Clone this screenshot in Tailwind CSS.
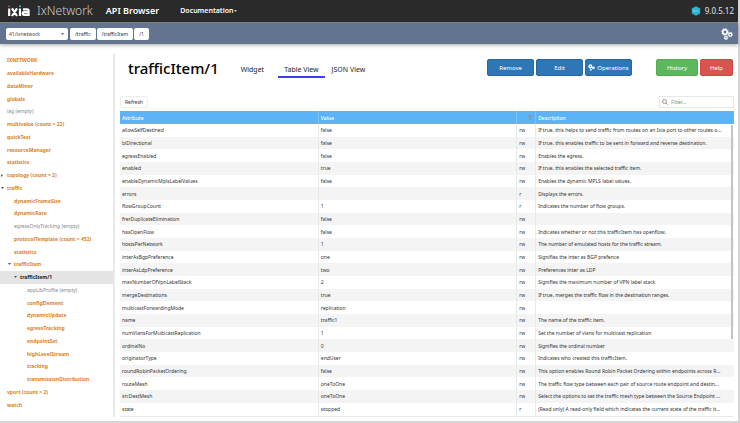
<!DOCTYPE html>
<html lang="en">
<head>
  <meta charset="UTF-8" />
  <meta name="viewport" content="width=device-width, initial-scale=1.0" />
  <title>IxNetwork API Browser</title>
  <script src="https://cdn.jsdelivr.net/npm/@tailwindcss/browser@4"></script>
</head>
<body class="h-screen bg-white font-['Noto_Sans',sans-serif] text-[5px] leading-[8px] text-[#333]">
<div class="h-full min-h-[420px] flex flex-col border-r-2 border-b-2 border-[#d6d6d6]">

  <!-- Top bar -->
  <header class="h-[23px] shrink-0 flex items-center bg-[#2a2a2a] border-b border-[#8a8f96] pl-2 pr-1 text-white">
    <svg class="w-[22px] h-[12px]" viewBox="0 0 22 12" fill="none" stroke="#fff" stroke-width="2.200" aria-label="ixia">
      <path d="M1.200 3.400V11M4 3.400l5 7.600M9 3.400L4 11M12 3.400V11M20.600 11V6q0-1.700-1.600-1.700H15M20.600 7.200H16q-1.300 0-1.300 1.300T16 9.900H20.600" />
      <path d="M.2 1.300H2.200" stroke="#e23b3b" stroke-width="1.400" />
      <path d="M11 1.300h2" stroke="#3bb4d8" stroke-width="1.400" />
    </svg>
    <span class="ml-[7px] text-[12px] leading-[16px] font-light text-[#d0d0d0]">IxNetwork</span>
    <span class="ml-[13px] text-[9px] leading-[12px] font-semibold">API Browser</span>
    <button class="ml-[21px] flex items-center gap-px text-[7px] leading-[10px] font-semibold">Documentation
      <svg class="w-[3px] h-[2px]" viewBox="0 0 4 2" fill="#fff"><path d="M0 0h4L2 2z" /></svg>
    </button>
    <div class="ml-auto flex items-center gap-1">
      <svg class="w-[10px] h-[10px]" viewBox="0 0 10 10">
        <path d="M5 .3l4.200 2.300v4.800L5 9.700.8 7.400V2.600z" fill="#2fb1cf" />
        <path d="M2.500 5.300V4.500l1.200.8V4.500M4.500 5h1.200M6.400 4.500l1 .8" stroke="#d8f3f8" stroke-width=".6" fill="none" />
      </svg>
      <span class="text-[8px] leading-[12px] text-[#e4e4e4]">9.0.5.12</span>
    </div>
  </header>

  <!-- Path bar -->
  <nav class="h-[21px] shrink-0 flex items-center bg-[#62748f] pl-[6px] pr-[5px] shadow-[0_1px_4px_rgba(0,0,0,0.35)] z-10">
    <div class="relative flex items-center">
      <select aria-label="Session" class="appearance-none w-[62px] h-3 rounded-[2px] bg-white pl-[3px] text-[5px] leading-[8px] text-[#444]">
        <option>41/ixnetwork</option>
      </select>
      <svg class="absolute right-1 w-[3px] h-[2px] pointer-events-none" viewBox="0 0 4 2" fill="#333"><path d="M0 0h4L2 2z" /></svg>
    </div>
    <div class="ml-[2px] flex gap-px">
      <a href="#" class="h-3 px-[5px] rounded-[2px] bg-white text-[5px] leading-[12px]">/traffic</a>
      <a href="#" class="h-3 px-[5px] rounded-[2px] bg-white text-[5px] leading-[12px]">/trafficItem</a>
      <a href="#" class="h-3 px-[5px] rounded-[2px] bg-white text-[5px] leading-[12px]">/1</a>
    </div>
    <button aria-label="Settings" class="ml-auto">
      <svg class="w-3 h-3" viewBox="0 0 12 12" fill="none" stroke="#fff">
        <circle cx="4" cy="4" r="2.300" stroke-width="1.700" />
        <circle cx="4" cy="4" r="3.400" stroke-width=".8" stroke-dasharray="1.300 1.370" />
        <circle cx="9.300" cy="6.600" r="1.600" stroke-width="1.300" />
        <circle cx="9.300" cy="6.600" r="2.400" stroke-width=".6" stroke-dasharray=".9 .98" />
        <circle cx="5" cy="9.800" r="1.300" stroke-width="1.200" />
        <circle cx="5" cy="9.800" r="2" stroke-width=".5" stroke-dasharray=".8 .77" />
      </svg>
    </button>
  </nav>

  <div class="flex-1 min-h-0 flex pt-[10px] pb-1">
    <!-- Tree -->
    <aside class="w-[115px] shrink-0 border-r-2 border-[#e9e9e9] pb-[6px]">
      <ul class="h-full flex flex-col font-bold text-[#d9821f] [&>li]:flex-1 [&>li]:flex [&>li]:items-center [&>li]:whitespace-nowrap">
        <li class="pl-[7px]"><a href="#">IXNETWORK</a></li>
        <li class="pl-[7px]"><a href="#">availableHardware</a></li>
        <li class="pl-[7px]"><a href="#">dataMiner</a></li>
        <li class="pl-[7px]"><a href="#">globals</a></li>
        <li class="pl-[7px] font-normal text-[#888]">lag (empty)</li>
        <li class="pl-[7px]"><a href="#">multivalue (count = 22)</a></li>
        <li class="pl-[7px]"><a href="#">quickTest</a></li>
        <li class="pl-[7px]"><a href="#">resourceManager</a></li>
        <li class="pl-[7px]"><a href="#">statistics</a></li>
        <li class="pl-px gap-1"><svg class="w-[2px] h-[3px]" viewBox="0 0 2 3" fill="#555"><path d="M0 0v3l2-1.500z" /></svg><a href="#">topology (count = 2)</a></li>
        <li class="pl-px gap-[3px]"><svg class="w-[3px] h-[2px]" viewBox="0 0 3 2" fill="#555"><path d="M0 0h3L1.500 2z" /></svg><a href="#">traffic</a></li>
        <li class="pl-[14px]"><a href="#">dynamicFrameSize</a></li>
        <li class="pl-[14px]"><a href="#">dynamicRate</a></li>
        <li class="pl-[14px] font-normal text-[#888]">egressOnlyTracking (empty)</li>
        <li class="pl-[14px]"><a href="#">protocolTemplate (count = 452)</a></li>
        <li class="pl-[14px]"><a href="#">statistics</a></li>
        <li class="pl-[8px] gap-[3px]"><svg class="w-[3px] h-[2px]" viewBox="0 0 3 2" fill="#555"><path d="M0 0h3L1.500 2z" /></svg><a href="#">trafficItem</a></li>
        <li class="pl-[14px] gap-[3px] bg-[#e4e4e4] text-[#222]"><svg class="w-[3px] h-[2px]" viewBox="0 0 3 2" fill="#555"><path d="M0 0h3L1.500 2z" /></svg><a href="#">trafficItem/1</a></li>
        <li class="pl-[27px] font-normal text-[#888]">appLibProfile (empty)</li>
        <li class="pl-[27px]"><a href="#">configElement</a></li>
        <li class="pl-[27px]"><a href="#">dynamicUpdate</a></li>
        <li class="pl-[27px]"><a href="#">egressTracking</a></li>
        <li class="pl-[27px]"><a href="#">endpointSet</a></li>
        <li class="pl-[27px]"><a href="#">highLevelStream</a></li>
        <li class="pl-[27px]"><a href="#">tracking</a></li>
        <li class="pl-[27px]"><a href="#">transmissionDistribution</a></li>
        <li class="pl-[7px]"><a href="#">vport (count = 2)</a></li>
        <li class="pl-[7px]"><a href="#">watch</a></li>
      </ul>
    </aside>

    <main class="flex-1 min-w-0 flex flex-col pl-[5px] pr-1">
      <!-- Title, tabs, actions -->
      <div class="h-[27px] shrink-0 flex items-center pl-2">
        <h1 class="text-[15px] leading-[22px] font-medium text-black">trafficItem/1</h1>
        <div class="ml-[18px] mt-[6px] flex text-[7px] leading-[10px] text-[#222]">
          <button class="px-1 py-px border-b-2 border-transparent">Widget</button>
          <button class="ml-[10px] px-[6px] py-px border-b-2 border-[#3d3df5]">Table View</button>
          <button class="ml-[3px] px-1 py-px border-b-2 border-transparent">JSON View</button>
        </div>
        <div class="ml-auto flex gap-[2px] pr-px text-[6px] leading-[8px] text-white">
          <button class="w-[47px] h-[17px] rounded-[2px] bg-[#2e77b6] border border-[#2868a0]">Remove</button>
          <button class="w-[47px] h-[17px] rounded-[2px] bg-[#2e77b6] border border-[#2868a0]">Edit</button>
          <button class="w-[47px] h-[17px] rounded-[2px] bg-[#2e77b6] border border-[#2868a0] flex items-center justify-center gap-[2px]">
            <svg class="w-[7px] h-[7px]" viewBox="0 0 12 12" fill="none" stroke="#fff">
              <circle cx="4" cy="4" r="2.300" stroke-width="2.400" />
              <circle cx="9.300" cy="6.600" r="1.600" stroke-width="1.800" />
              <circle cx="5" cy="9.800" r="1.200" stroke-width="1.600" />
            </svg>
            Operations
          </button>
          <button class="ml-[22px] w-[42px] h-[17px] rounded-[2px] bg-[#5cb85c] border border-[#4fae4f]">History</button>
          <button class="w-[33px] h-[17px] rounded-[2px] bg-[#d9534f] border border-[#d34642]">Help</button>
        </div>
      </div>

      <!-- Toolbar -->
      <div class="mt-[15px] mb-[3px] shrink-0 flex items-center justify-between">
        <button class="h-3 px-[4px] rounded-[2px] border border-[#eee] text-[5px] leading-[8px]">Refresh</button>
        <label class="w-[75px] h-3 flex items-center gap-[3px] border border-[#e8e8e8] px-[2px]">
          <svg class="w-[6px] h-[6px] shrink-0" viewBox="0 0 6 6" fill="none" stroke="#777" stroke-width=".8"><circle cx="2.500" cy="2.500" r="1.900" /><path d="M4 4l1.700 1.700" /></svg>
          <input type="text" aria-label="Filter" placeholder="Filter..." class="w-full min-w-0 text-[5px] leading-[8px] outline-none placeholder:text-[#888]" />
        </label>
      </div>

      <!-- Attributes -->
      <div class="relative flex-1 min-h-0">
        <table class="w-full h-full table-fixed border-collapse border-b border-[#e8e8e8] [&_td]:px-[2px] [&_td]:py-0 [&_td]:truncate [&_td+td]:border-l [&_td+td]:border-[#e9e9e9] [&_tbody>tr:nth-child(even)]:bg-[#f4f4f4]">
          <colgroup>
            <col />
            <col />
            <col class="w-[19px]" />
            <col />
          </colgroup>
          <thead>
            <tr class="bg-[#5cb3f5] text-left text-white [&>th]:h-[13px] [&>th]:px-[2px] [&>th]:font-medium [&>th+th]:border-l [&>th+th]:border-[#7cc3f8]">
              <th>Attribute</th>
              <th>Value</th>
              <th aria-label="Access"><svg class="ml-auto w-[6px] h-[6px]" viewBox="0 0 6 6" fill="#7f9db3"><path d="M0 0h6L3.800 3v3L2.200 5V3z" /></svg></th>
              <th>Description</th>
            </tr>
          </thead>
          <tbody>
            <tr><td>allowSelfDestined</td><td>false</td><td>rw</td><td>If true, this helps to send traffic from routes on an Ixia port to other routes o...</td></tr>
            <tr><td>biDirectional</td><td>false</td><td>rw</td><td>If true, this enables traffic to be sent in forward and reverse destination.</td></tr>
            <tr><td>egressEnabled</td><td>false</td><td>rw</td><td>Enables the egress.</td></tr>
            <tr><td>enabled</td><td>true</td><td>rw</td><td>If true, this enables the selected traffic item.</td></tr>
            <tr><td>enableDynamicMplsLabelValues</td><td>false</td><td>rw</td><td>Enables the dynamic MPLS label values.</td></tr>
            <tr><td>errors</td><td></td><td>r</td><td>Displays the errors.</td></tr>
            <tr><td>flowGroupCount</td><td>1</td><td>r</td><td>Indicates the number of flow groups.</td></tr>
            <tr><td>frerDuplicateElimination</td><td>false</td><td>rw</td><td></td></tr>
            <tr><td>hasOpenFlow</td><td>false</td><td>rw</td><td>Indicates whether or not this trafficItem has openflow.</td></tr>
            <tr><td>hostsPerNetwork</td><td>1</td><td>rw</td><td>The number of emulated hosts for the traffic stream.</td></tr>
            <tr><td>interAsBgpPreference</td><td>one</td><td>rw</td><td>Signifies the inter as BGP prefence</td></tr>
            <tr><td>interAsLdpPreference</td><td>two</td><td>rw</td><td>Preferences inter as LDP</td></tr>
            <tr><td>maxNumberOfVpnLabelStack</td><td>2</td><td>rw</td><td>Signifies the maximum number of VPN label stack</td></tr>
            <tr><td>mergeDestinations</td><td>true</td><td>rw</td><td>If true, merges the traffic flow in the destination ranges.</td></tr>
            <tr><td>multicastForwardingMode</td><td>replication</td><td>rw</td><td></td></tr>
            <tr><td>name</td><td>traffic1</td><td>rw</td><td>The name of the traffic item.</td></tr>
            <tr><td>numVlansForMulticastReplication</td><td>1</td><td>rw</td><td>Set the number of vlans for multicast replication</td></tr>
            <tr><td>ordinalNo</td><td>0</td><td>rw</td><td>Signifies the ordinal number</td></tr>
            <tr><td>originatorType</td><td>endUser</td><td>rw</td><td>Indicates who created this trafficItem.</td></tr>
            <tr><td>roundRobinPacketOrdering</td><td>false</td><td>rw</td><td>This option enables Round Robin Packet Ordering within endpoints across R...</td></tr>
            <tr><td>routeMesh</td><td>oneToOne</td><td>rw</td><td>The traffic flow type between each pair of source route endpoint and destin...</td></tr>
            <tr><td>srcDestMesh</td><td>oneToOne</td><td>rw</td><td>Select the options to set the traffic mesh type between the Source Endpoint ...</td></tr>
            <tr><td>state</td><td>stopped</td><td>r</td><td>(Read only) A read-only field which indicates the current state of the traffic it...</td></tr>
          </tbody>
        </table>
        <div class="absolute right-px top-[14px] w-[2px] h-[70%] bg-[#c4c4c4]"></div>
      </div>
    </main>
  </div>
</div>
</body>
</html>
